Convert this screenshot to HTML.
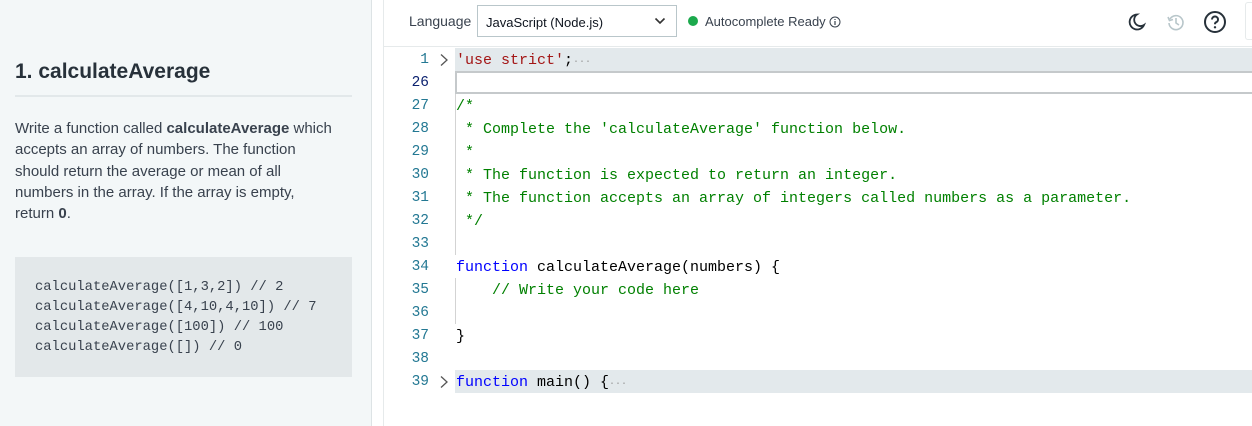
<!DOCTYPE html>
<html><head><meta charset="utf-8"><style>
*{margin:0;padding:0;box-sizing:border-box}
body{width:1252px;height:426px;overflow:hidden;background:#fff;font-family:"Liberation Sans",sans-serif;position:relative}
.left{position:absolute;left:0;top:0;width:372px;height:426px;background:#f3f7f8;border-right:1px solid #dde3e5}
.strip{position:absolute;left:372px;top:0;width:12px;height:426px;background:#fff;border-right:1px solid #e6eaeb}
h1{position:absolute;left:15px;top:60px;font-size:21px;font-weight:bold;color:#27313a}
.hr{position:absolute;left:15px;top:95px;width:337px;height:2px;background:#e2e8ea}
.desc{position:absolute;left:15px;top:118px;width:360px;font-size:15px;line-height:21.3px;color:#39424e;white-space:nowrap}
.ex{position:absolute;left:15px;top:257px;width:337px;height:120px;background:#e3e8ea;padding:21px 0 0 20px;font-family:"Liberation Mono",monospace;font-size:13.8px;line-height:20px;color:#39424e;white-space:pre}
.top{position:absolute;left:384px;top:0;right:0;height:47px;border-bottom:1px solid #e6eaeb}
.lang{position:absolute;left:409px;top:13px;font-size:14px;color:#39424e}
.sel{position:absolute;left:477px;top:5px;width:200px;height:32px;border:1px solid #b9c6ca;font-size:13px;color:#0e141e;padding:9px 0 0 8px}
.sel svg{position:absolute;right:10px;top:11px}
.dot{position:absolute;left:688px;top:16px;width:10px;height:10px;border-radius:50%;background:#1ba94c}
.ac{position:absolute;left:705px;top:14px;font-size:13px;color:#39424e}
.code{position:absolute;left:384px;top:48px;right:0;font-family:"Liberation Mono",monospace;font-size:15px}
.ln{position:relative;height:23px;line-height:25px}
.num{position:absolute;left:0;width:45px;text-align:right;color:#237893;font-size:14.5px}
.txt{position:absolute;left:72px;white-space:pre;color:#000}
.hl{position:absolute;left:71px;right:0;top:0;bottom:0;background:#e3e9ec}
.box{position:absolute;left:71px;right:0;top:0;bottom:0;border:2px solid #c5c9cb;border-right:none}
.fold{position:absolute;left:55px;top:5px}
.guide{position:absolute;left:71px;top:0;bottom:0;width:1px;background:#d3d3d3}
.k{color:#0000ff}.s{color:#a31515}.c{color:#008000}
</style></head><body>
<div class="left"></div><div class="strip"></div>
<h1>1. calculateAverage</h1>
<div class="hr"></div>
<div class="desc">Write a function called <b>calculateAverage</b> which<br>accepts an array of numbers. The function<br>should return the average or mean of all<br>numbers in the array. If the array is empty,<br>return <b>0</b>.</div>
<div class="ex">calculateAverage([1,3,2]) // 2
calculateAverage([4,10,4,10]) // 7
calculateAverage([100]) // 100
calculateAverage([]) // 0</div>
<div class="top"></div>
<div class="lang">Language</div>
<div class="sel">JavaScript (Node.js)<svg width="12" height="8" viewBox="0 0 12 8"><path d="M1.5 1.5 6 6 10.5 1.5" fill="none" stroke="#333" stroke-width="1.6"/></svg></div>
<div class="dot"></div>
<div class="ac">Autocomplete Ready <svg width="12" height="12" viewBox="0 0 12 12" style="vertical-align:-2px"><circle cx="6" cy="6" r="5" fill="none" stroke="#39424e" stroke-width="1"/><path d="M6 5v4M6 3v1" stroke="#39424e" stroke-width="1.2"/></svg></div>
<svg style="position:absolute;left:1125px;top:11px" width="22" height="22" viewBox="0 0 22 22"><path d="M12 3.5a7.5 7.5 0 1 0 7 10.5 6 6 0 0 1-7-10.5z" fill="none" stroke="#27313a" stroke-width="1.8"/></svg>
<svg style="position:absolute;left:1165px;top:11px" width="22" height="22" viewBox="0 0 22 22"><path d="M5 8a7 7 0 1 1-1 4" fill="none" stroke="#b8c6ca" stroke-width="1.6"/><path d="M3 6l1.5 3.5 3.5-1" fill="none" stroke="#b8c6ca" stroke-width="1.6"/><path d="M11 7v5l3 2" fill="none" stroke="#b8c6ca" stroke-width="1.6"/></svg>
<svg style="position:absolute;left:1203px;top:10px" width="24" height="24" viewBox="0 0 24 24"><circle cx="12" cy="12" r="10" fill="none" stroke="#27313a" stroke-width="2"/><path d="M9 9.5a3 3 0 1 1 4 2.8c-.8.4-1 .9-1 1.9" fill="none" stroke="#27313a" stroke-width="2"/><circle cx="12" cy="17.3" r="1.2" fill="#27313a"/></svg>
<div style="position:absolute;left:1245px;top:2px;width:10px;height:38px;border:1px solid #e6eaeb;border-radius:3px"></div>
<div class="code">
<div class="ln"><div class="hl"></div><span class="num">1</span><svg class="fold" width="10" height="14" viewBox="0 0 10 14"><path d="M2 1.5 8 7 2 12.5" fill="none" stroke="#555" stroke-width="1.3"/></svg><span class="txt"><span class="s">'use strict'</span>;<span style="color:#999;font-size:10px">···</span></span></div>
<div class="ln"><div class="box"></div><span class="num" style="color:#0b216f">26</span></div>
<div class="ln"><div class="guide"></div><span class="num">27</span><span class="txt c">/*</span></div>
<div class="ln"><div class="guide"></div><span class="num">28</span><span class="txt c"> * Complete the 'calculateAverage' function below.</span></div>
<div class="ln"><div class="guide"></div><span class="num">29</span><span class="txt c"> *</span></div>
<div class="ln"><div class="guide"></div><span class="num">30</span><span class="txt c"> * The function is expected to return an integer.</span></div>
<div class="ln"><div class="guide"></div><span class="num">31</span><span class="txt c"> * The function accepts an array of integers called numbers as a parameter.</span></div>
<div class="ln"><div class="guide"></div><span class="num">32</span><span class="txt c"> */</span></div>
<div class="ln"><div class="guide"></div><span class="num">33</span></div>
<div class="ln"><span class="num">34</span><span class="txt"><span class="k">function</span> calculateAverage(numbers) {</span></div>
<div class="ln"><div class="guide"></div><span class="num">35</span><span class="txt c">    // Write your code here</span></div>
<div class="ln"><div class="guide"></div><span class="num">36</span></div>
<div class="ln"><span class="num">37</span><span class="txt">}</span></div>
<div class="ln"><span class="num">38</span></div>
<div class="ln"><div class="hl"></div><span class="num">39</span><svg class="fold" width="10" height="14" viewBox="0 0 10 14"><path d="M2 1.5 8 7 2 12.5" fill="none" stroke="#555" stroke-width="1.3"/></svg><span class="txt"><span class="k">function</span> main() {<span style="color:#999;font-size:10px">···</span></span></div>
</div>
</body></html>
